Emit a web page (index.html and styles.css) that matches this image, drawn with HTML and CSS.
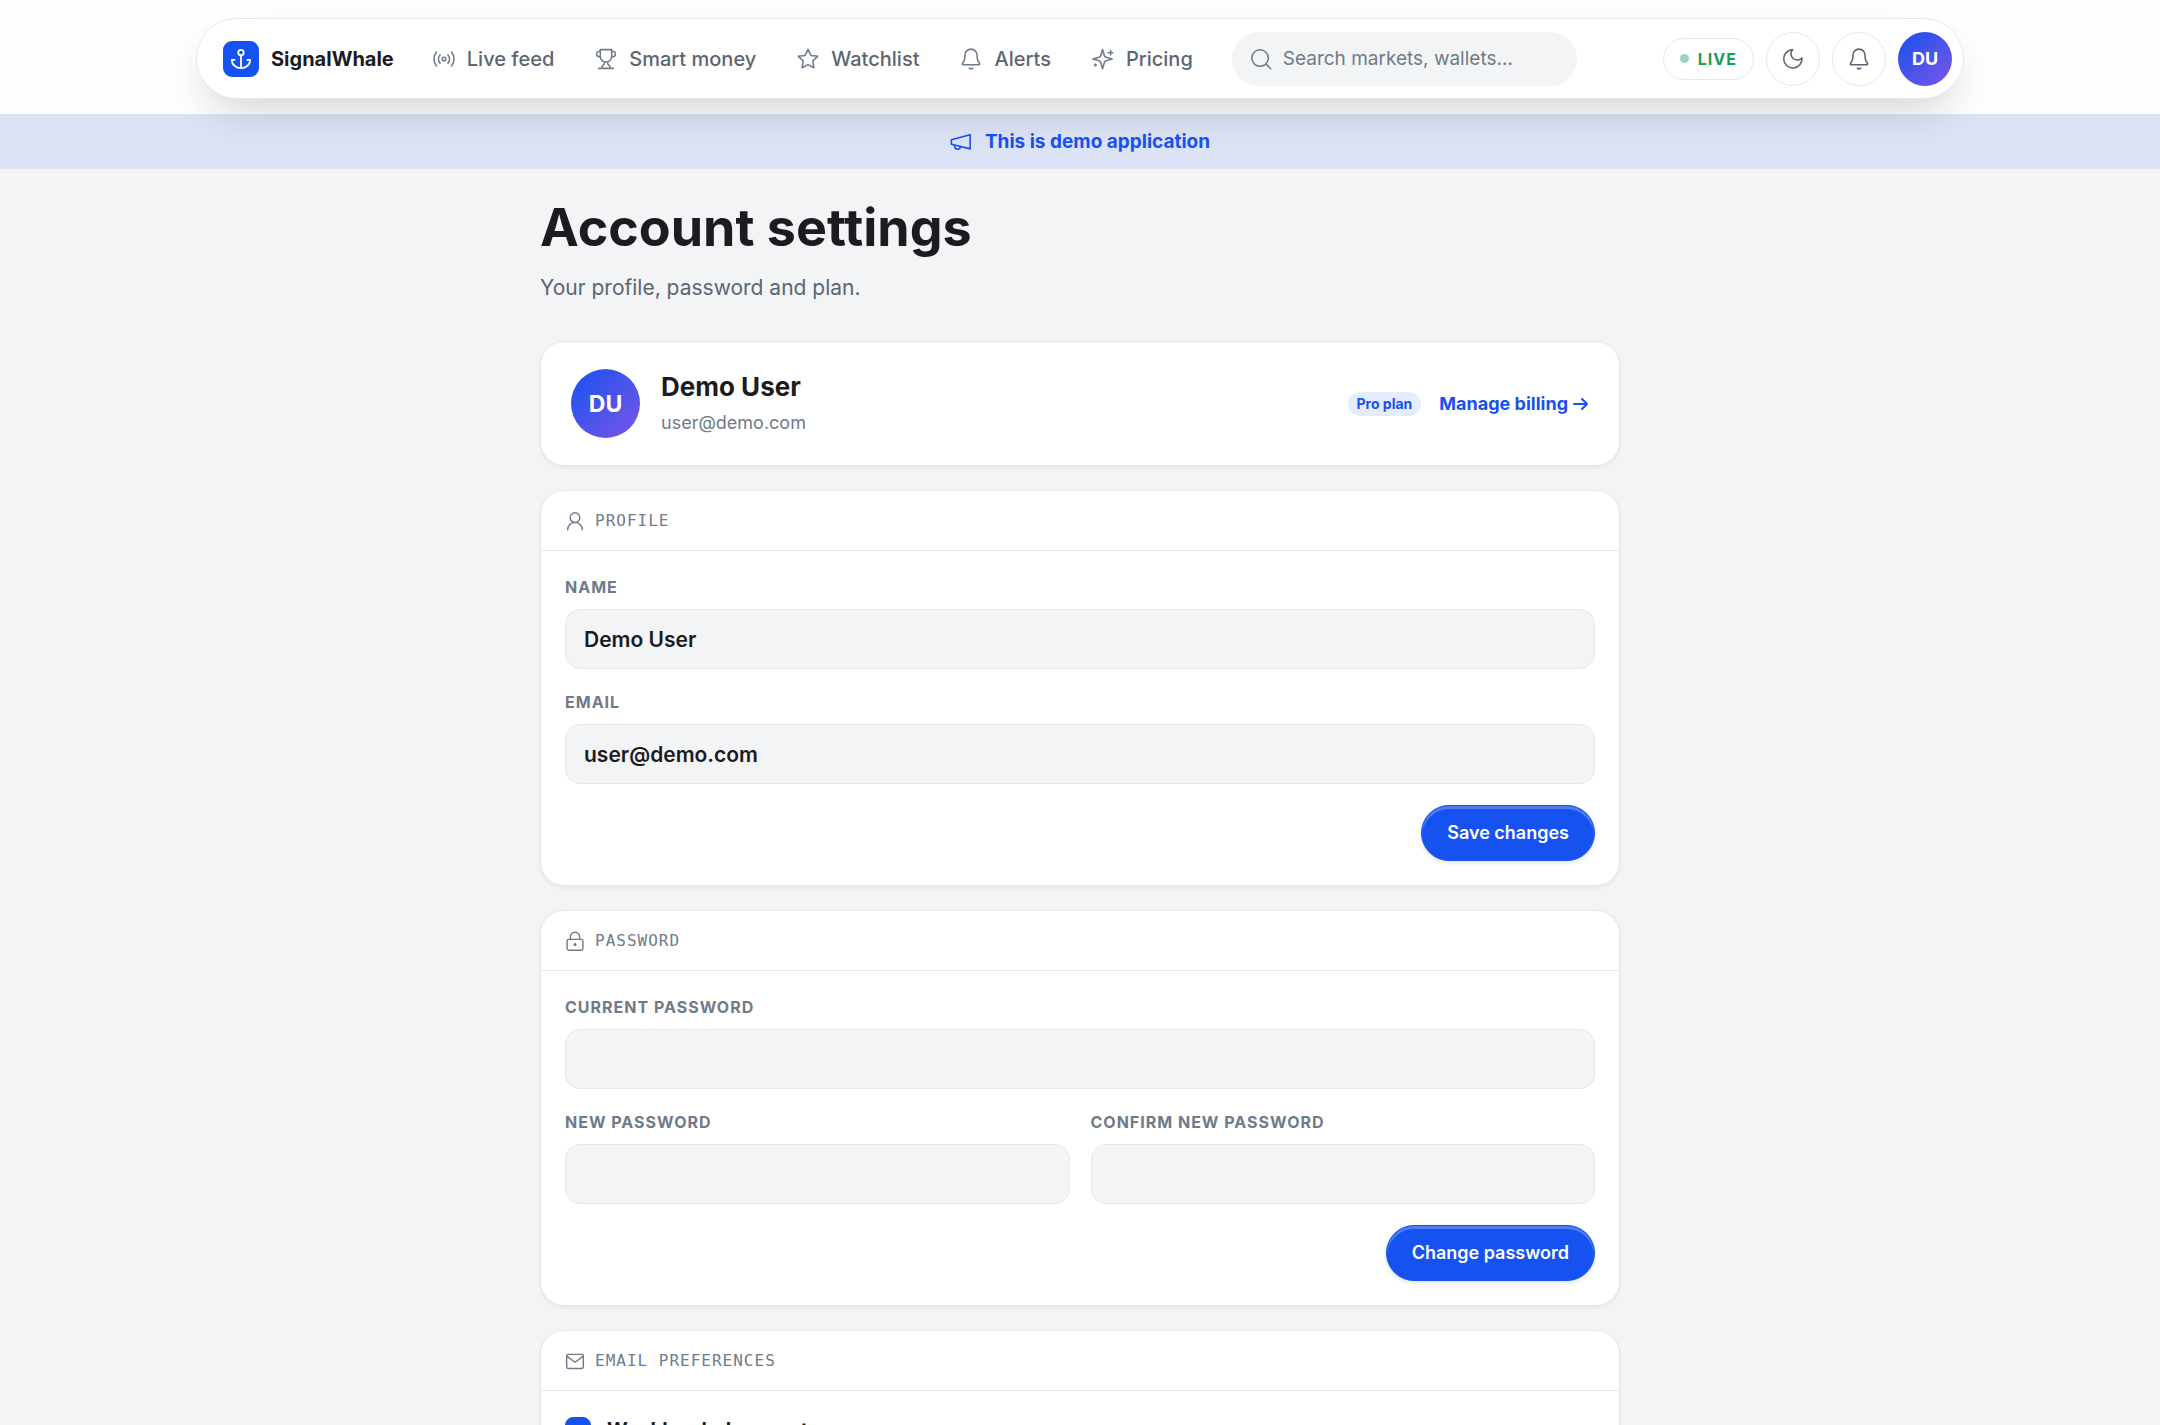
FILE: index.html
```html
<!DOCTYPE html>
<html lang="en">
<head>
<meta charset="utf-8">
<meta name="viewport" content="width=device-width, initial-scale=1">
<title>Account settings – SignalWhale</title>
<link rel="stylesheet" href="styles.css">
</head>
<body>
<header class="site-header">
  <div class="topbar">
    <a class="brand" href="#">
      <span class="brand-mark">
        <svg class="icon icon-anchor" viewBox="0 0 24 24" aria-hidden="true"><circle cx="12" cy="5" r="3"/><path d="M12 8v14M5 13H2a10 9 0 0 0 20 0h-3"/></svg>
      </span>
      SignalWhale
    </a>
    <nav class="nav" aria-label="Main">
      <a class="nav-link" href="#"><svg class="icon" viewBox="0 0 24 24" aria-hidden="true"><circle cx="12" cy="12" r="2"/><path d="M7.8 7.4a6.5 6.5 0 0 0 0 9.2M16.2 7.4a6.5 6.5 0 0 1 0 9.2M3.8 4.4a12 12 0 0 0 0 15.2M20.2 4.4a12 12 0 0 1 0 15.2"/></svg>Live feed</a>
      <a class="nav-link" href="#"><svg class="icon" viewBox="0 0 24 24" aria-hidden="true"><path d="M5.800 1.800h12.400v7.400a6.200 6.200 0 0 1-12.400 0zM5.800 3.800H4a2.200 2.200 0 0 0-2.200 2.200v.8A2.600 2.600 0 0 0 4.400 9.400h1.400M18.200 3.800H20a2.200 2.200 0 0 1 2.200 2.200v.8a2.600 2.600 0 0 1-2.600 2.600h-1.400M10.200 15.200v1.400c0 2.400-2.900 2-2.900 5.200M13.800 15.200v1.400c0 2.400 2.900 2 2.900 5.200M4 22.200h16"/></svg>Smart money</a>
      <a class="nav-link" href="#"><svg class="icon" viewBox="0 0 24 24" aria-hidden="true"><path d="M12 1.500l3.200 6.600 7.300 1-5.300 5.100 1.300 7.400L12 18.100l-6.500 3.500 1.300-7.400L1.500 9.100l7.300-1z"/></svg>Watchlist</a>
      <a class="nav-link" href="#"><svg class="icon" viewBox="0 0 24 24" aria-hidden="true"><path d="M12 1.200a6.600 6.600 0 0 0-6.600 6.600c0 5.700-1.200 7.200-2.600 8.700-.7.900-.3 1.700.6 1.700h17.200c.9 0 1.300-.8.600-1.700-1.400-1.500-2.600-3-2.600-8.700A6.600 6.600 0 0 0 12 1.200zM10.200 22a2.400 2.400 0 0 0 3.600 0"/></svg>Alerts</a>
      <a class="nav-link" href="#"><svg class="icon" viewBox="0 0 24 24" aria-hidden="true"><path d="M11.500 1.500l1.900 6.700a3 3 0 0 0 2 2l6.600 1.900-6.600 1.900a3 3 0 0 0-2 2l-1.900 6.600-1.900-6.600a3 3 0 0 0-2-2L1 12.100l6.600-1.900a3 3 0 0 0 2-2zM20.300 2.700v5M22.800 5.200h-5M3.700 17.500v2M4.700 18.500h-2"/></svg>Pricing</a>
    </nav>
    <label class="search">
      <svg class="icon" viewBox="0 0 24 24" aria-hidden="true"><circle cx="11" cy="11" r="9"/><path d="M17.600 17.600l5 5"/></svg>
      <input class="search-input" type="search" placeholder="Search markets, wallets…" aria-label="Search markets, wallets">
    </label>
    <div class="actions">
      <span class="live"><span class="live-dot"></span>LIVE</span>
      <button class="round-button" type="button" aria-label="Toggle dark mode"><svg class="icon" viewBox="0 0 24 24" aria-hidden="true"><path d="M11.500 1.800a6.800 6.800 0 0 0 10.300 9 10 10 0 1 1-10.300-9z"/></svg></button>
      <button class="round-button" type="button" aria-label="Notifications"><svg class="icon" viewBox="0 0 24 24" aria-hidden="true"><path d="M12 1.200a6.600 6.600 0 0 0-6.600 6.600c0 5.700-1.200 7.200-2.600 8.700-.7.900-.3 1.700.6 1.700h17.200c.9 0 1.300-.8.600-1.700-1.400-1.500-2.600-3-2.600-8.700A6.600 6.600 0 0 0 12 1.200zM10.200 22a2.400 2.400 0 0 0 3.600 0"/></svg></button>
      <button class="avatar" type="button" aria-label="Account menu">DU</button>
    </div>
  </div>
</header>

<div class="demo-banner">
  <svg class="icon" viewBox="0 0 24 24" aria-hidden="true"><path d="M1.500 9.500L22 4v15.500L1.500 14.500zM5 15.400v1.200a3.200 3.200 0 0 0 6.300.8v-.6"/></svg>
  This is demo application
</div>

<main class="page">
  <div class="page-head">
    <h1 class="page-title">Account settings</h1>
    <p class="page-intro">Your profile, password and plan.</p>
  </div>

  <section class="card summary">
    <span class="avatar avatar-large">DU</span>
    <div class="summary-text">
      <h2 class="summary-name">Demo User</h2>
      <p class="summary-email">user@demo.com</p>
    </div>
    <div class="summary-plan">
      <span class="badge">Pro plan</span>
      <a class="billing-link" href="#">Manage billing <svg class="icon icon-arrow" viewBox="0 0 16 16" aria-hidden="true"><path d="M1 8h13M9 3l5 5-5 5"/></svg></a>
    </div>
  </section>

  <section class="card">
    <h2 class="card-title"><svg class="icon" viewBox="0 0 24 24" aria-hidden="true"><circle cx="12" cy="8" r="5.800"/><path d="M3.200 22.500a8.800 8.800 0 0 1 17.600 0"/></svg>PROFILE</h2>
    <form class="card-body">
      <div class="field">
        <label class="label" for="name">NAME</label>
        <input class="input" id="name" type="text" value="Demo User">
      </div>
      <div class="field">
        <label class="label" for="email">EMAIL</label>
        <input class="input" id="email" type="email" value="user@demo.com">
      </div>
      <button class="button" type="button">Save changes</button>
    </form>
  </section>

  <section class="card">
    <h2 class="card-title"><svg class="icon" viewBox="0 0 24 24" aria-hidden="true"><rect x="2.500" y="10" width="19" height="13" rx="2"/><path d="M6.500 10V7a5.500 5.500 0 0 1 11 0v3"/><circle cx="12" cy="16.300" r="1"/></svg>PASSWORD</h2>
    <form class="card-body">
      <div class="field">
        <label class="label" for="current">CURRENT PASSWORD</label>
        <input class="input" id="current" type="password">
      </div>
      <div class="field-row">
        <div class="field">
          <label class="label" for="new">NEW PASSWORD</label>
          <input class="input" id="new" type="password">
        </div>
        <div class="field">
          <label class="label" for="confirm">CONFIRM NEW PASSWORD</label>
          <input class="input" id="confirm" type="password">
        </div>
      </div>
      <button class="button" type="button">Change password</button>
    </form>
  </section>

  <section class="card">
    <h2 class="card-title"><svg class="icon" viewBox="0 0 24 24" aria-hidden="true"><rect x="2" y="4" width="20" height="17" rx="2"/><path d="M2.500 6.500L12 13.500l9.500-7"/></svg>EMAIL PREFERENCES</h2>
    <form class="card-body">
      <label class="check"><input class="checkbox" type="checkbox" checked>Weekly whale report</label>
    </form>
  </section>
</main>
</body>
</html>
```

FILE: styles.css
```css
:root {
  --blue: #1652f0;
  --ink: #1b1c1f;
  --text: #5b6673;
  --muted: #6f7b88;
  --line: #e6e8ea;
  --surface: #f3f4f6;
}

* { box-sizing: border-box; }

html {
  background: var(--surface);
  scrollbar-width: none;
}

body {
  margin: 0;
  background: var(--surface);
  color: var(--ink);
  font-family: Inter, "Liberation Sans", sans-serif;
  font-size: 20px;
  line-height: 30px;
}

h1, h2, p { margin: 0; }
a { color: inherit; text-decoration: none; }
button, input { font: inherit; color: inherit; }

.icon {
  width: 22px;
  height: 22px;
  flex: none;
  fill: none;
  stroke: currentColor;
  stroke-width: 1.7;
  stroke-linecap: round;
  stroke-linejoin: round;
}

/* Header */
.site-header {
  position: relative;
  padding: 18px 24px 15px;
  background: #fdfefe;
}

.topbar {
  display: flex;
  align-items: center;
  max-width: 1768px;
  height: 81px;
  margin: 0 auto;
  padding: 0 11px 0 26px;
  border: 1px solid var(--line);
  border-radius: 41px;
  background: #fff;
  box-shadow: 0 20px 44px -12px rgba(20, 22, 28, 0.2);
}

.brand {
  display: flex;
  align-items: center;
  gap: 12px;
  font-weight: 700;
}

.brand-mark {
  display: grid;
  place-items: center;
  width: 36px;
  height: 36px;
  border-radius: 9px;
  background: var(--blue);
  color: #fff;
}

.icon-anchor { stroke-width: 2; }

.nav {
  display: flex;
  gap: 41px;
  margin-left: 39px;
}

.nav-link {
  display: flex;
  align-items: center;
  gap: 12px;
  color: var(--text);
  font-weight: 500;
}

.nav-link .icon { color: var(--muted); }

.search {
  display: flex;
  align-items: center;
  gap: 11px;
  width: 345px;
  height: 54px;
  margin-left: 39px;
  padding: 0 18px;
  border-radius: 27px;
  background: var(--surface);
  color: var(--muted);
}

.search-input {
  min-width: 0;
  flex: 1;
  padding: 0;
  border: 0;
  outline: 0;
  background: none;
  font-size: 19px;
}

.search-input::placeholder { color: var(--muted); opacity: 1; }

.actions {
  display: flex;
  align-items: center;
  gap: 12px;
  margin-left: auto;
}

.live {
  display: flex;
  align-items: center;
  gap: 9px;
  height: 42px;
  padding: 0 16px;
  border: 1px solid var(--line);
  border-radius: 21px;
  color: #16a05a;
  font-size: 16px;
  font-weight: 700;
  letter-spacing: 1px;
}

.live-dot {
  width: 9px;
  height: 9px;
  border-radius: 50%;
  background: #98d4b8;
}

.round-button {
  display: grid;
  place-items: center;
  width: 54px;
  height: 54px;
  padding: 0;
  border: 1px solid var(--line);
  border-radius: 50%;
  background: #fff;
  color: var(--text);
}

.avatar {
  display: grid;
  place-items: center;
  flex: none;
  width: 54px;
  height: 54px;
  padding: 0;
  border: 0;
  border-radius: 50%;
  background: linear-gradient(135deg, var(--blue), #7c55e6);
  color: #fff;
  font-size: 18px;
  font-weight: 700;
}

/* Demo notice */
.demo-banner {
  display: flex;
  align-items: center;
  justify-content: center;
  gap: 13px;
  height: 55px;
  background: rgba(22, 82, 240, 0.1);
  color: var(--blue);
  font-size: 19px;
  font-weight: 700;
}

/* Page */
.page {
  display: grid;
  gap: 24px;
  max-width: 1128px;
  margin: 0 auto;
  padding: 32px 24px;
}

.page-head { padding-bottom: 13px; }

.page-title {
  font-size: 52px;
  font-weight: 700;
  line-height: 54px;
}

.page-intro {
  margin-top: 17px;
  color: var(--text);
  font-size: 21px;
  line-height: 32px;
}

.card {
  border: 1px solid var(--line);
  border-radius: 24px;
  background: #fff;
  box-shadow: 0 2px 4px rgba(20, 22, 28, 0.06);
}

.summary {
  display: flex;
  align-items: center;
  gap: 21px;
  padding: 27px 30px;
}

.avatar-large {
  width: 69px;
  height: 69px;
  font-size: 23px;
}

.summary-text {
  display: grid;
  gap: 3px;
}

.summary-name {
  font-size: 26px;
  font-weight: 700;
  line-height: 36px;
}

.summary-email {
  color: var(--muted);
  font-size: 18px;
}

.summary-plan {
  display: flex;
  align-items: center;
  gap: 18px;
  margin-left: auto;
}

.badge {
  padding: 0 9px;
  border-radius: 12px;
  background: #e5ecfd;
  color: var(--blue);
  font-size: 14px;
  font-weight: 700;
  line-height: 24px;
}

.billing-link {
  display: flex;
  align-items: center;
  gap: 5px;
  color: var(--blue);
  font-size: 18px;
  font-weight: 700;
}

.icon-arrow { width: 16px; height: 16px; stroke-width: 2; }

.card-title {
  display: flex;
  align-items: center;
  gap: 10px;
  height: 60px;
  padding: 0 24px;
  border-bottom: 1px solid var(--line);
  color: var(--muted);
  font-family: "DejaVu Sans Mono", monospace;
  font-size: 16px;
  font-weight: 400;
  letter-spacing: 1px;
}

.card-title .icon { width: 20px; height: 20px; }

.card-body {
  display: grid;
  gap: 21px;
  padding: 24px;
}

.field {
  display: grid;
  gap: 10px;
}

.field-row {
  display: grid;
  grid-template-columns: 1fr 1fr;
  gap: 21px;
}

.label {
  color: var(--muted);
  font-size: 16px;
  font-weight: 700;
  letter-spacing: 1px;
  line-height: 24px;
}

.input {
  width: 100%;
  height: 60px;
  padding: 0 18px;
  border: 1px solid var(--line);
  border-radius: 15px;
  outline: 0;
  background: var(--surface);
  font-size: 21px;
  font-weight: 600;
}

.button {
  justify-self: end;
  height: 56px;
  padding: 0 25px;
  border: 1px solid var(--blue);
  border-radius: 28px;
  background: var(--blue);
  box-shadow: inset 0 3px 0 rgba(255, 255, 255, 0.25), 0 2px 4px rgba(20, 22, 28, 0.12);
  color: #fff;
  font-size: 18px;
  font-weight: 600;
}

.check {
  display: flex;
  align-items: center;
  gap: 16px;
  font-weight: 700;
}

.checkbox {
  display: grid;
  place-items: center;
  width: 26px;
  height: 26px;
  margin: 0;
  appearance: none;
  border: 1px solid var(--line);
  border-radius: 8px;
}

.checkbox:checked {
  border-color: var(--blue);
  background: var(--blue);
}

.checkbox:checked::after {
  content: "";
  width: 7px;
  height: 12px;
  border: solid #fff;
  border-width: 0 2px 2px 0;
  rotate: 45deg;
}
```
